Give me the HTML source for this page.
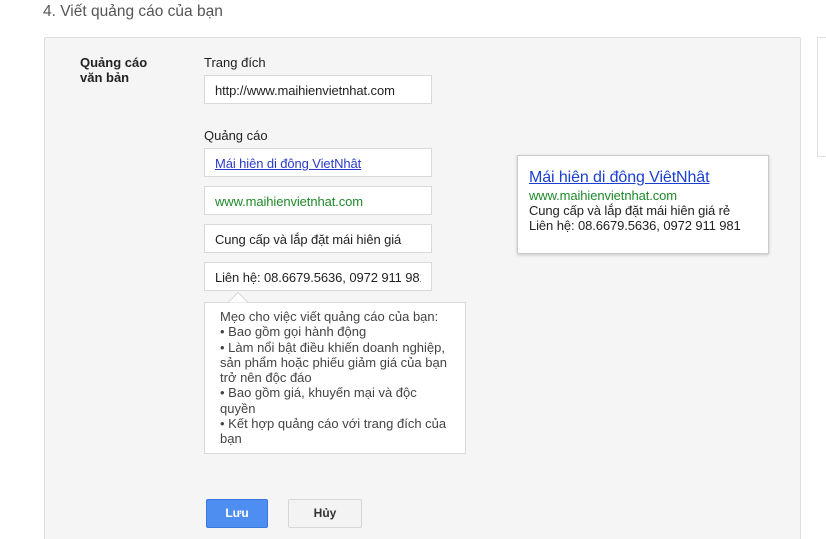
<!DOCTYPE html>
<html><head><meta charset="utf-8"><style>
*{box-sizing:border-box;margin:0;padding:0}
html,body{width:826px;height:539px;overflow:hidden}
body{background:#fff;font-family:"Liberation Sans",Arial,sans-serif;position:relative;color:#222}
.a{position:absolute}
.h{left:43px;top:3px;font-size:15.5px;color:#555}
.panel{left:44px;top:37px;width:757px;height:510px;background:#f5f5f5;border:1px solid #ddd;border-radius:2px}
.rp{left:817px;top:37px;width:20px;height:120px;border:1px solid #e0e0e0;background:#fff}
.lbl{font-size:13px;color:#222}
.in{left:204px;width:228px;height:29px;background:#fff;border:1px solid #d9d9d9;font-size:13px;padding:7px 10px;white-space:nowrap;overflow:hidden;letter-spacing:-0.1px}
.tip{left:204px;top:302px;width:262px;height:152px;background:#fff;border:1px solid #d9d9d9;font-size:13px;line-height:15.3px;color:#444;padding:6px 15px}
.btn{height:29px;font-size:12px;font-weight:bold;text-align:center;line-height:27px;border-radius:2px}
.pv{left:517px;top:155px;width:252px;height:99px;background:#fff;border:1px solid #ccc;box-shadow:0 1px 3px rgba(0,0,0,.2);padding:12px 11px;font-size:13px;line-height:15px;letter-spacing:-0.1px}
</style></head><body>
<div class="a h">4. Viết quảng cáo của bạn</div>
<div class="a panel"></div>
<div class="a rp"></div>
<div class="a lbl" style="left:80px;top:55px;font-weight:bold;line-height:15px">Quảng cáo<br>văn bản</div>
<div class="a lbl" style="left:204px;top:55px">Trang đích</div>
<div class="a in" style="top:75px">http://www.maihienvietnhat.com</div>
<div class="a lbl" style="left:204px;top:128px">Quảng cáo</div>
<div class="a in" style="top:148px;text-decoration:underline;color:#2a3bc9">Mái hiên di đông VietNhât</div>
<div class="a in" style="top:186px;color:#1e8a2a">www.maihienvietnhat.com</div>
<div class="a in" style="top:224px">Cung cấp và lắp đặt mái hiên giá</div>
<div class="a in" style="top:262px"><span style="display:inline-block;width:206px;overflow:hidden">Liên hệ: 08.6679.5636, 0972 911 981</span></div>
<div class="a tip">Mẹo cho việc viết quảng cáo của bạn:<br>• Bao gồm gọi hành động<br>• Làm nổi bật điều khiến doanh nghiệp, sản phẩm hoặc phiếu giảm giá của bạn trở nên độc đáo<br>• Bao gồm giá, khuyến mại và độc quyền<br>• Kết hợp quảng cáo với trang đích của bạn</div>
<svg class="a" style="left:228px;top:292px" width="20" height="11"><path d="M0 10.5 L10 0.5 L20 10.5" fill="#fff" stroke="#d9d9d9"/></svg>
<div class="a btn" style="left:206px;top:499px;width:62px;background:#4d8ef0;border:1px solid #3b78e0;color:#fff">Lưu</div>
<div class="a btn" style="left:288px;top:499px;width:74px;background:#f3f3f3;border:1px solid #d6d6d6;color:#333">Hủy</div>
<div class="a pv"><div style="font-size:16px;color:#1a3fd0;text-decoration:underline;line-height:20px">Mái hiên di đông ViêtNhât</div><div style="color:#1e8a2a">www.maihienvietnhat.com</div><div>Cung cấp và lắp đặt mái hiên giá rẻ</div><div>Liên hệ: 08.6679.5636, 0972 911 981</div></div>
</body></html>
